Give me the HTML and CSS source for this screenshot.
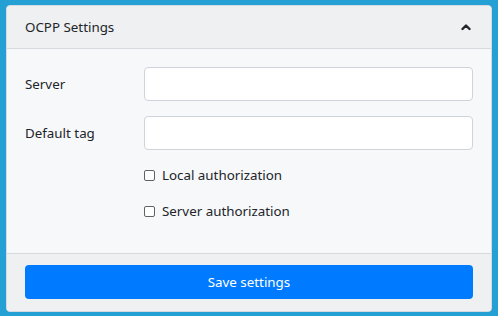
FILE: index.html
```html
<!DOCTYPE html>
<html>
<head>
<meta charset="utf-8">
<link rel="stylesheet" href="styles.css">
</head>
<body>
<div class="card">
  <div class="card-header">
    <span class="title">OCPP Settings</span>
    <svg class="chev" width="10" height="8" viewBox="0 0 10 8"><polyline points="1.5,6 5,2.5 8.5,6" fill="none" stroke="#212529" stroke-width="2.4" stroke-linecap="round" stroke-linejoin="round"/></svg>
  </div>
  <div class="card-body">
    <div class="row">
      <label class="lbl">Server</label>
      <input class="input" type="text">
    </div>
    <div class="row row2">
      <label class="lbl">Default tag</label>
      <input class="input" type="text">
    </div>
    <div class="check"><span class="box"></span><span>Local authorization</span></div>
    <div class="check"><span class="box"></span><span>Server authorization</span></div>
  </div>
  <div class="card-footer">
    <button class="btn">Save settings</button>
  </div>
</div>
</body>
</html>
```
FILE: styles.css
```css
html, body { margin: 0; padding: 0; }
body {
  background: #25a0d5;
  font-family: "Noto Sans", "Open Sans", sans-serif;
  font-size: 13.35px;
  color: #212529;
  padding: 5px 6px;
  height: 316px;
  box-sizing: border-box;
}
.card {
  width: 486px;
  box-sizing: border-box;
  border: 1px solid #d6d9dd;
  border-radius: 4px;
  background: #f7f8fa;
  overflow: hidden;
}
.card-header {
  height: 42px;
  background: #eff0f2;
  border-bottom: 1px solid #d6d9dd;
  display: flex;
  align-items: center;
  justify-content: space-between;
  padding: 0 20px 0 18px;
}
.chev { display: block; margin-top: -1px; }
.card-body {
  padding: 18px 18px 24px 18px;
}
.row {
  display: flex;
  align-items: center;
  height: 34px;
  margin-bottom: 15px;
}
.row2 { margin-bottom: 7px; }
.lbl { width: 119px; flex: none; }
.input {
  flex: 1;
  height: 34px;
  box-sizing: border-box;
  border: 1px solid #ced4da;
  border-radius: 4px;
  background: #fff;
  margin: 0;
}
.check {
  height: 36px;
  display: flex;
  align-items: center;
  padding-left: 119px;
}
.box {
  width: 9px;
  height: 9px;
  border: 1px solid #5f6368;
  border-radius: 2px;
  background: #fff;
  margin-right: 7px;
  flex: none;
}
.card-footer {
  background: #eff0f2;
  border-top: 1px solid #d6d9dd;
  padding: 11px 18px 12px 18px;
}
.btn {
  display: block;
  width: 100%;
  height: 34px;
  border: none;
  border-radius: 4px;
  background: #007bff;
  color: #fff;
  font-family: "Noto Sans", "Open Sans", sans-serif;
  font-size: 13.35px;
  margin: 0;
}
```
